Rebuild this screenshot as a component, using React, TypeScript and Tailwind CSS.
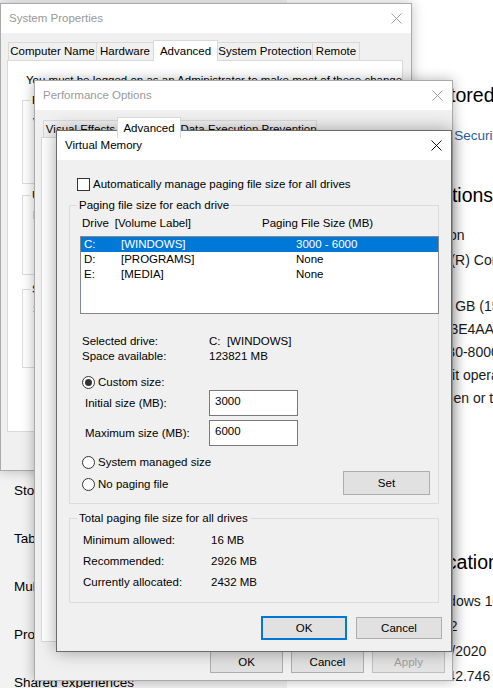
import React from "react";

const CloseX = ({ color }: { color: string }) => (
  <svg width="11" height="11" viewBox="0 0 11 11" className="shrink-0">
    <path d="M0.5 0.5L10.5 10.5M10.5 0.5L0.5 10.5" stroke={color} strokeWidth="1" />
  </svg>
);

const TitleBar = ({ title, active }: { title: string; active?: boolean }) => (
  <div className="flex h-[29px] shrink-0 items-center justify-between bg-white pl-[8px] pr-[9px]">
    <span className={active ? "text-black" : "text-[#999999]"}>{title}</span>
    <CloseX color={active ? "#111111" : "#a0a0a0"} />
  </div>
);

const GroupBox = ({
  label,
  className = "",
  children,
}: {
  label: string;
  className?: string;
  children?: React.ReactNode;
}) => (
  <fieldset className={`min-w-0 border border-[#dcdcdc] ${className}`}>
    <legend className="ml-[7px] px-[2px] leading-[15px]">{label}</legend>
    {children}
  </fieldset>
);

const Radio = ({ label, checked }: { label: string; checked?: boolean }) => (
  <div className="flex h-[13px] items-center">
    <span className="flex h-[13px] w-[13px] shrink-0 items-center justify-center rounded-full border border-[#333333] bg-white">
      {checked && <span className="h-[7px] w-[7px] rounded-full bg-[#333333]" />}
    </span>
    <span className="ml-[3px] whitespace-nowrap">{label}</span>
  </div>
);

const Btn = ({
  children,
  className = "",
  disabled,
}: {
  children: React.ReactNode;
  className?: string;
  disabled?: boolean;
}) => (
  <div
    className={`flex shrink-0 items-center justify-center border ${
      disabled ? "border-[#bfbfbf] bg-[#e3e3e3] text-[#a0a0a0]" : "border-[#adadad] bg-[#e1e1e1]"
    } ${className}`}
  >
    {children}
  </div>
);

const drives = [
  { d: "C:", label: "[WINDOWS]", size: "3000 - 6000", selected: true },
  { d: "D:", label: "[PROGRAMS]", size: "None" },
  { d: "E:", label: "[MEDIA]", size: "None" },
];

const specs: [string, React.ReactNode][] = [
  ["Device name", "Devon"],
  ["Processor", <>Intel(R) Core(TM) i7-8550U CPU @ 1.80GHz 1.99<br />GHz</>],
  ["Installed RAM", "16.0 GB (15.8 GB usable)"],
  ["Device ID", "D2F3E4AA-5C1B-4F0E-9A7D-2B6C8E1F0A93"],
  ["Product ID", "00330-80000-00000-AA123"],
  ["System type", "64-bit operating system, x64-based processor"],
  ["Pen and touch", "No pen or touch input is available for this display"],
];

const winSpecs: [string, string][] = [
  ["Edition", "Windows 10 Pro"],
  ["Version", "20H2"],
  ["Installed on", "12/1/2020"],
  ["OS build", "19042.746"],
];

export default function App() {
  return (
    <div className="relative flex h-[688px] w-[493px] overflow-hidden bg-white font-['Liberation_Sans',Arial,sans-serif] text-[11.5px] leading-[15px] text-black">
      {/* Settings window behind the dialogs */}
      <nav className="flex w-[287px] shrink-0 flex-col bg-[#f2f2f2] pt-[466px] text-[13.5px]">
        {["Storage", "Tablet", "Multitasking", "Projecting to this PC", "Shared experiences"].map((n) => (
          <div key={n} className="flex h-[48px] shrink-0 items-center whitespace-nowrap pl-[14px]">
            {n}
          </div>
        ))}
      </nav>
      <main className="min-w-0 flex-1 whitespace-nowrap pl-[24px] pt-[81px]">
        <div className="text-[19.5px] leading-[28px]">Your PC is monitored and protected.</div>
        <div className="mt-[17px] text-[13.5px] leading-[20px] text-[#2b5f9e]">See details in Windows Security</div>
        <div className="mt-[35px] text-[19.5px] leading-[28px]">Device specifications</div>
        <div className="mt-[15px] grid grid-cols-[113px_auto] text-[14px] leading-[23px] text-[#1a1a1a]">
          {specs.map(([k, v], i) => (
            <React.Fragment key={k}>
              <div className={i === 1 ? "mt-[2px]" : ""}>{k}</div>
              <div className={i === 1 ? "mt-[2px]" : ""}>{v}</div>
            </React.Fragment>
          ))}
        </div>
        <div className="-ml-[4px] mt-[138px] text-[19.5px] leading-[28px]">Windows specifications</div>
        <div className="mt-[13px] grid grid-cols-[113px_auto] text-[14px] leading-[25px] text-[#1a1a1a]">
          {winSpecs.map(([k, v]) => (
            <React.Fragment key={k}>
              <div>{k}</div>
              <div>{v}</div>
            </React.Fragment>
          ))}
        </div>
      </main>

      {/* System Properties */}
      <div className="absolute left-0 top-[3px] flex h-[468px] w-[412px] flex-col border border-[#aaaaaa] bg-[#f0f0f0] shadow-[0_0_12px_rgba(0,0,0,0.25)]">
        <TitleBar title="System Properties" />
        <div className="pl-[6px] pt-[7px]">
          <div className="ml-[1px] flex items-end whitespace-nowrap">
            <div className="flex h-[18px] w-[89px] items-center justify-center border border-b-0 border-[#d9d9d9]">Computer Name</div>
            <div className="-ml-px flex h-[18px] w-[58px] items-center justify-center border border-b-0 border-[#d9d9d9]">Hardware</div>
            <div className="relative z-10 -mb-px -ml-px flex h-[21px] w-[65px] items-center justify-center border border-b-0 border-[#d9d9d9] bg-white">Advanced</div>
            <div className="-ml-px flex h-[18px] w-[96px] items-center justify-center border border-b-0 border-[#d9d9d9]">System Protection</div>
            <div className="-ml-px flex h-[18px] w-[48px] items-center justify-center border border-b-0 border-[#d9d9d9]">Remote</div>
          </div>
          <div className="h-[372px] w-[396px] overflow-hidden border border-[#d9d9d9] bg-white pl-[14px] pt-[12px]">
            <p className="ml-[4px] whitespace-nowrap">You must be logged on as an Administrator to make most of these changes.</p>
            <GroupBox label="Performance" className="mt-[5px] h-[91px] w-[368px]">
              <p className="ml-[10px] mt-[7px] whitespace-nowrap">Visual effects, processor scheduling, memory usage, and virtual memory</p>
            </GroupBox>
            <GroupBox label="User Profiles" className="mt-[4px] h-[87px] w-[368px]">
              <p className="ml-[10px] mt-[5px] whitespace-nowrap">Desktop settings related to your sign-in</p>
            </GroupBox>
            <GroupBox label="Startup and Recovery" className="mt-[7px] h-[86px] w-[368px]">
              <p className="ml-[10px] mt-[5px] whitespace-nowrap">System startup, system failure, and debugging information</p>
            </GroupBox>
          </div>
        </div>
      </div>

      {/* Performance Options */}
      <div className="absolute left-[34px] top-[80px] flex h-[601px] w-[419px] flex-col border border-[#aaaaaa] bg-[#f0f0f0] shadow-[0_0_12px_rgba(0,0,0,0.3)]">
        <TitleBar title="Performance Options" />
        <div className="flex flex-col pl-[6px] pt-[7px]">
          <div className="ml-[2px] flex items-end whitespace-nowrap">
            <div className="flex h-[17px] w-[75px] items-center justify-center border border-b-0 border-[#d9d9d9]">Visual Effects</div>
            <div className="relative z-10 -mb-px -ml-px flex h-[21px] w-[64px] items-center justify-center border border-b-0 border-[#d9d9d9] bg-white">Advanced</div>
            <div className="-ml-px flex h-[17px] w-[137px] items-center justify-center border border-b-0 border-[#d9d9d9]">Data Execution Prevention</div>
          </div>
          <div className="h-[505px] w-[405px] border border-[#d9d9d9] bg-white" />
          <div className="mt-[9px] flex justify-end gap-[8px] pr-[7px]">
            <Btn className="h-[22px] w-[73px]">OK</Btn>
            <Btn className="h-[22px] w-[73px]">Cancel</Btn>
            <Btn className="h-[22px] w-[73px]" disabled>Apply</Btn>
          </div>
        </div>
      </div>

      {/* Virtual Memory */}
      <div className="absolute left-[56px] top-[130px] flex h-[522px] w-[396px] flex-col border border-[#6b6b6b] bg-[#f0f0f0] shadow-[0_0_16px_rgba(0,0,0,0.35)]">
        <TitleBar title="Virtual Memory" active />
        <div className="flex flex-col">
          <div className="px-[12px]">
            <div className="mt-[18px] flex h-[13px] items-center pl-[8px]">
              <span className="h-[13px] w-[13px] shrink-0 border border-[#333333] bg-white" />
              <span className="ml-[3px] whitespace-nowrap">Automatically manage paging file size for all drives</span>
            </div>

            <GroupBox label="Paging file size for each drive" className="mt-[7px]">
              <div className="px-[10px] pb-[8px]">
                <div className="mt-[3px] flex whitespace-nowrap pl-[2px]">
                  <span className="w-[180px]">
                    Drive<span className="ml-[6px]">[Volume Label]</span>
                  </span>
                  <span>Paging File Size (MB)</span>
                </div>
                <div className="mt-[5px] h-[78px] w-[359px] border border-[#828790] bg-white">
                  {drives.map((r) => (
                    <div
                      key={r.d}
                      className={`flex h-[15px] items-center pl-[3px] ${r.selected ? "bg-[#0078d7] text-white" : ""}`}
                    >
                      <span className="w-[37px]">{r.d}</span>
                      <span className="w-[175px]">{r.label}</span>
                      <span>{r.size}</span>
                    </div>
                  ))}
                </div>

                <div className="mt-[20px] grid grid-cols-[127px_auto] pl-[2px]">
                  <span>Selected drive:</span>
                  <span>C:&nbsp;&nbsp;[WINDOWS]</span>
                  <span>Space available:</span>
                  <span>123821 MB</span>
                </div>

                <div className="mt-[12px] pl-[2px]">
                  <Radio label="Custom size:" checked />
                </div>
                <div className="mt-[1px] flex h-[26px] items-center">
                  <span className="w-[129px] pl-[5px]">Initial size (MB):</span>
                  <div className="h-[26px] w-[89px] border border-[#7a7a7a] bg-white pl-[5px] pt-[3px]">3000</div>
                </div>
                <div className="mt-[4px] flex h-[26px] items-center">
                  <span className="w-[129px] pl-[5px]">Maximum size (MB):</span>
                  <div className="h-[26px] w-[89px] border border-[#7a7a7a] bg-white pl-[5px] pt-[3px]">6000</div>
                </div>

                <div className="mt-[10px] flex items-start pl-[2px]">
                  <div className="flex flex-col gap-[9px]">
                    <Radio label="System managed size" />
                    <Radio label="No paging file" />
                  </div>
                  <Btn className="-mr-[2px] ml-auto mt-[15px] h-[24px] w-[87px]">Set</Btn>
                </div>
              </div>
            </GroupBox>

            <GroupBox label="Total paging file size for all drives" className="mt-[7px]">
              <div className="mt-[4px] flex flex-col pb-[9px] pl-[13px]">
                {[
                  ["Minimum allowed:", "16 MB"],
                  ["Recommended:", "2926 MB"],
                  ["Currently allocated:", "2432 MB"],
                ].map(([k, v]) => (
                  <div key={k} className="flex h-[21px] items-center">
                    <span className="w-[128px]">{k}</span>
                    <span>{v}</span>
                  </div>
                ))}
              </div>
            </GroupBox>
          </div>

          <div className="mt-[13px] flex items-center justify-end gap-[9px] pr-[9px]">
            <div className="flex h-[24px] w-[86px] items-center justify-center border-2 border-[#0078d7] bg-[#e1e1e1]">OK</div>
            <Btn className="h-[22px] w-[86px]">Cancel</Btn>
          </div>
        </div>
      </div>
    </div>
  );
}
